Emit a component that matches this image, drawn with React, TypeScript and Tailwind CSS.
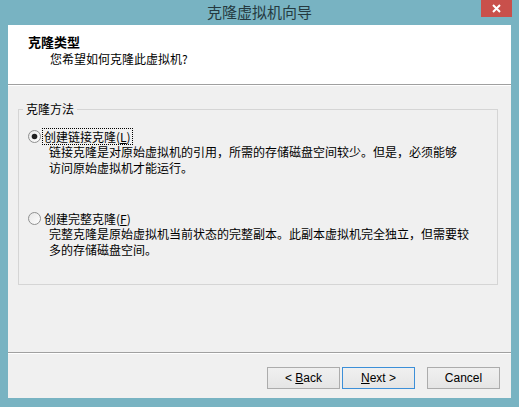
import type { ReactNode } from 'react'

const cjk = "font-['Noto_Sans_CJK_SC','Noto_Sans',sans-serif]"

function Radio({ checked }: { checked: boolean }) {
  return (
    <svg width="13" height="13" viewBox="0 0 13 13" className="shrink-0">
      <defs>
        <linearGradient id={checked ? 'rg1' : 'rg2'} x1="0" y1="0" x2="1" y2="1">
          <stop offset="0" stopColor="#e6e6e6" />
          <stop offset="1" stopColor="#ffffff" />
        </linearGradient>
      </defs>
      <circle cx="6.5" cy="6.5" r="6" fill={`url(#${checked ? 'rg1' : 'rg2'})`} stroke="#8e8f8f" />
      {checked && <circle cx="6.5" cy="6.5" r="2.8" fill="#1e1e1e" />}
    </svg>
  )
}

function Option({ checked, focused, label, mnemonic, lines }: {
  checked: boolean
  focused?: boolean
  label: string
  mnemonic: string
  lines: string[]
}) {
  return (
    <div className="flex flex-col">
      <div className="flex items-center h-[16px] pl-[9px]">
        <Radio checked={checked} />
        <span className={`ml-[2px] px-[1px] leading-[15px] ${focused ? 'outline outline-1 outline-dotted outline-black' : ''}`}>
          {label}(<span className="underline">{mnemonic}</span>)
        </span>
      </div>
      <div className="pl-[30px] leading-[16px]">
        {lines.map((l, i) => (
          <p key={i}>{l}</p>
        ))}
      </div>
    </div>
  )
}

function Btn({ children, primary }: { children: ReactNode; primary?: boolean }) {
  return (
    <button
      className={`w-[73px] h-[22px] text-[12px] font-['Liberation_Sans',sans-serif] text-black bg-gradient-to-b from-[#f0f0f0] to-[#e5e5e5] border ${
        primary ? 'border-[#3c8fd8] from-[#ecf4fc] to-[#dcecfc]' : 'border-[#acacac]'
      }`}
    >
      {children}
    </button>
  )
}

export default function App() {
  return (
    <div className={`w-[519px] h-[407px] bg-[#78b3c2] flex flex-col ${cjk} text-[12px] text-black`}>
      {/* title bar */}
      <div className="relative h-[25px] flex items-center justify-center">
        <span className="text-[15px] text-[#253a40] leading-[20px] -mt-[1px]">克隆虚拟机向导</span>
        <div className="absolute top-0 right-[7px] w-[31px] h-[17px] bg-[#c9504b] flex items-center justify-center">
          <svg width="9" height="9" viewBox="0 0 9 9">
            <path d="M1 1L8 8M8 1L1 8" stroke="#fff" strokeWidth="2" />
          </svg>
        </div>
      </div>

      {/* client area */}
      <div className="mx-[8px] h-[373px] flex flex-col bg-[#f0f0f0]">
        <div className="h-[59px] bg-white pt-[8px] leading-[17px]">
          <p className="pl-[20px] font-bold text-[13px]">克隆类型</p>
          <p className="pl-[42px]">您希望如何克隆此虚拟机?</p>
        </div>
        <div className="h-px bg-[#a0a0a0]" />
        <div className="h-px bg-white" />

        <div className="flex-1 flex flex-col">
          <fieldset className="mt-[15px] ml-[10px] w-[480px] h-[184px] border border-[#d5d5d5] p-0 pb-[20px]">
            <legend className="ml-[4px] px-[3px] leading-[16px]">克隆方法</legend>
            <div className="pt-[11px] flex flex-col gap-[34px]">
              <Option
                checked
                focused
                label="创建链接克隆"
                mnemonic="L"
                lines={[
                  '链接克隆是对原始虚拟机的引用，所需的存储磁盘空间较少。但是，必须能够',
                  '访问原始虚拟机才能运行。',
                ]}
              />
              <Option
                checked={false}
                label="创建完整克隆"
                mnemonic="F"
                lines={[
                  '完整克隆是原始虚拟机当前状态的完整副本。此副本虚拟机完全独立，但需要较',
                  '多的存储磁盘空间。',
                ]}
              />
            </div>
          </fieldset>

          <div className="flex-1" />
          <div className="h-px bg-[#a0a0a0]" />
          <div className="h-px bg-white" />
          <div className="flex justify-end pt-[13px] pb-[9px] pr-[11px]">
            <Btn>
              &lt; <span className="underline">B</span>ack
            </Btn>
            <div className="ml-[2px]">
              <Btn primary>
                <span className="underline">N</span>ext &gt;
              </Btn>
            </div>
            <div className="ml-[12px]">
              <Btn>Cancel</Btn>
            </div>
          </div>
        </div>
      </div>
    </div>
  )
}
